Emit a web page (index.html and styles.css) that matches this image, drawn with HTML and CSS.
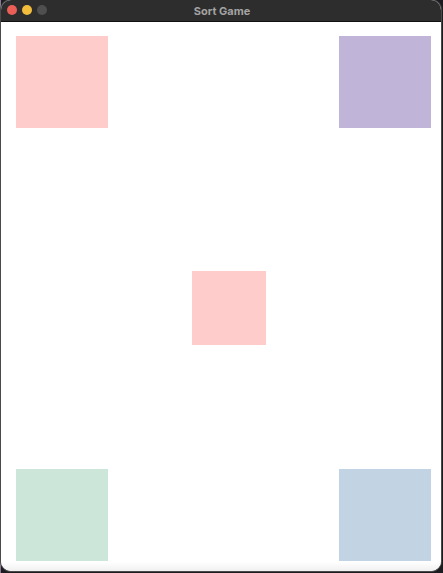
FILE: index.html
```html
<!DOCTYPE html>
<html>
<head>
<meta charset="utf-8">
<title>Sort Game</title>
<link rel="stylesheet" href="styles.css">
</head>
<body>
<div class="window">
  <div class="titlebar">
    <div class="lights">
      <span class="light red"></span>
      <span class="light yellow"></span>
      <span class="light grey"></span>
    </div>
    <div class="title">Sort Game</div>
  </div>
  <div class="canvas">
    <div class="box tl"></div>
    <div class="box tr"></div>
    <div class="box center"></div>
    <div class="box bl"></div>
    <div class="box br"></div>
  </div>
</div>
</body>
</html>
```
FILE: styles.css
```css
html, body {
  margin: 0;
  padding: 0;
  width: 443px;
  height: 573px;
  background: #1c1b1f;
  overflow: hidden;
}
body {
  background: linear-gradient(to right, #8a7a96 0, #8a7a96 1px, #1c1b1f 1px);
}
.window {
  position: relative;
  margin-left: 1px;
  width: 440px;
  height: 571px;
  border-radius: 10px;
  overflow: hidden;
  background: #ffffff;
  box-shadow: 0 0 0 1px #4a4a4a;
  display: flex;
  flex-direction: column;
}
.titlebar {
  height: 21px;
  flex: 0 0 21px;
  background: #2d2d2d;
  border-bottom: 1px solid #111;
  position: relative;
  display: flex;
  align-items: center;
  justify-content: center;
}
.lights {
  position: absolute;
  left: 6px;
  top: 5px;
  display: flex;
  gap: 5px;
}
.light {
  width: 10px;
  height: 10px;
  border-radius: 50%;
  display: block;
}
.red { background: #ec5f57; }
.yellow { background: #f3bd3c; }
.grey { background: #4f4f4f; }
.title {
  font-family: "Inter", "Liberation Sans", sans-serif;
  font-weight: 700;
  font-size: 11px;
  color: #a3a3a3;
  margin-left: 2px;
}
.canvas {
  position: relative;
  flex: 1;
  background: linear-gradient(to bottom, #ffffff 0, #ffffff 540px, #f0f0f0 100%);
}
.box {
  position: absolute;
}
.tl { left: 15px; top: 14px; width: 92px; height: 92px; background: #ffcccc; }
.tr { left: 338px; top: 14px; width: 92px; height: 92px; background: #c0b5d8; }
.center { left: 191px; top: 249px; width: 74px; height: 74px; background: #ffcccc; }
.bl { left: 15px; top: 447px; width: 92px; height: 92px; background: #cce6da; }
.br { left: 338px; top: 447px; width: 92px; height: 92px; background: #c2d4e3; }
```
